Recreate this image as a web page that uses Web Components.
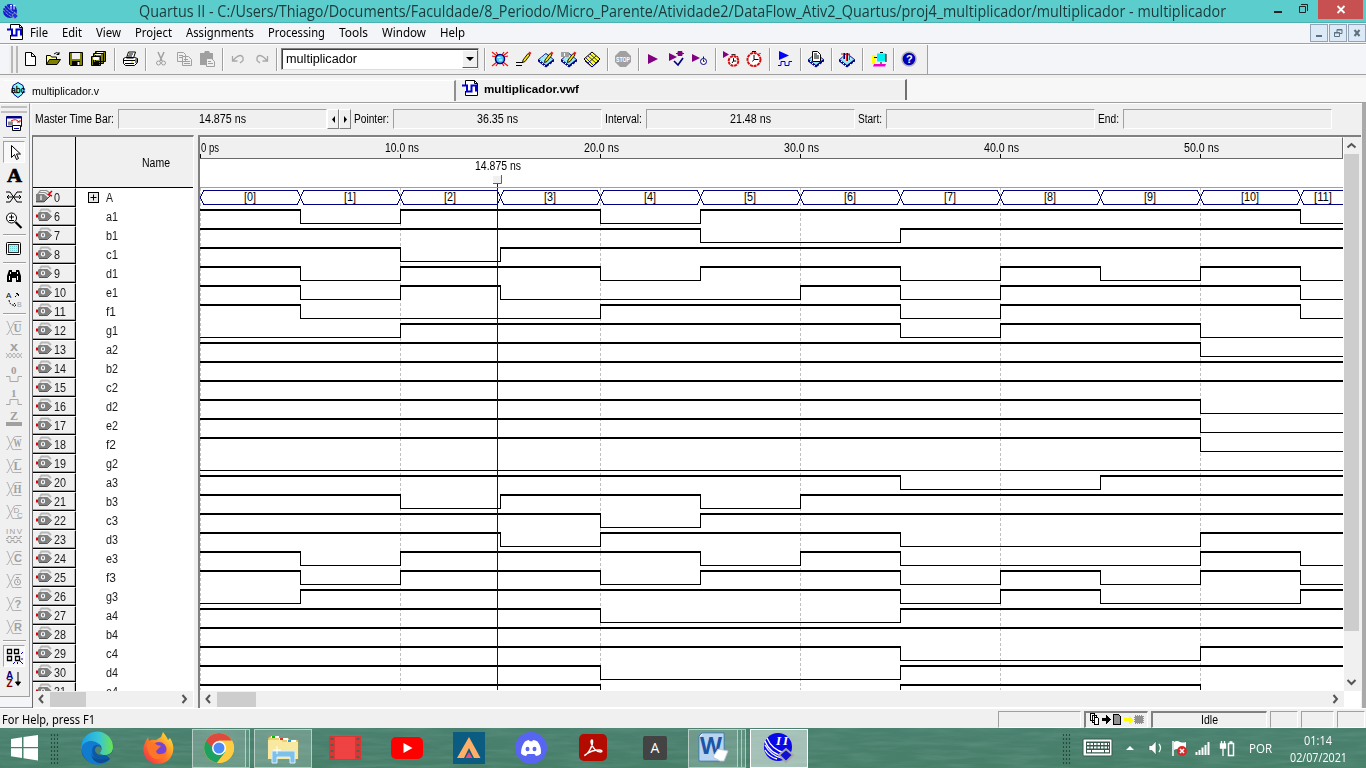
<!DOCTYPE html>
<html lang="en">
<head>
<meta charset="utf-8">
<title>Quartus II</title>
<style>
html,body{margin:0;padding:0;width:1366px;height:768px;overflow:hidden;background:#f0f0f0}
</style>
</head>
<body>
<quartus-window></quartus-window>
<script>
const X = 'style="shape-rendering:crispEdges"';
const T = (x, y, s, t, f = '#a0a0a0', extra = '') => `<text x="${x}" y="${y}" font-size="${s}" fill="${f}" ${extra}>${t}</text>`;
const chip = '<path d="M0 8.500 8 2l8 6.500v2L8 16.500l-8-6z" fill="#000080"/><path d="M1 8.500 8 3l7 5.500-7 5.500z" fill="#8feaf2"/><path d="M3 7.500l5-4M5 9l6-4.500M8 5l4 3" stroke="#fff" stroke-dasharray="1 1"/><path d="M2 11l1-1m1 3 1-1m1 3 1-1m4-1 1 1m2-3 1 1" stroke="#fff"/>';
const pencil = '<path d="M7 9l5-6.500 2 1.500-5 6.500-2.500 1z" fill="#ffe000" stroke="#000" stroke-width=".9"/><path d="M12 2.500l1.500-2 2 1.500-1.500 2z" fill="#e02020"/>';
const watch = (cx, cy, r, c) => `<circle cx="${cx}" cy="${cy}" r="${r}" fill="#fff" stroke="${c}" stroke-width="2" stroke-dasharray="3 .7"/><path d="M${cx} ${cy - r + 2}V${cy}H${cx + r - 2}M${cx} ${cy}l-1.5 2M${cx - 2} ${cy - r - 1.5}h4M${cx + r - 1} ${cy - r}l1 1" stroke="#000" fill="none"/>`;
const bus = '<path d="M.5 1.500h1l5 13h2m7 0h-7M.5 14.500h1l5-9q1-4 3-4h6" fill="none" stroke="#b0b0b0"/>';
const valueIcon = (t, s = 11.5) => bus + T(7.5, 12, s, t, '#a0a0a0', 'font-weight="bold" textLength="8" lengthAdjust="spacingAndGlyphs" style="font-family:Liberation Serif,serif"');

const ICONS = {
  app: '<circle cx="8" cy="8" r="7" fill="#1420c8"/><path d="M2 4q5 7 11 8M1.5 7q5 6 9 7M4 2q4 6 10 8" stroke="#cfe" stroke-width=".9" fill="none" stroke-dasharray="1 .8"/><path d="M8 2.5h2m1.300 0h2M9 2.500v4m3-4v4" stroke="#fff" stroke-width="1"/><path d="M10 12l3-2 3 3-3 3z" fill="#2030e0" stroke="#99a" stroke-width=".7"/>',
  vwf: '<path d="M3.500 5V.5h9l3 3V15.500H3.500V11" fill="#fff" stroke="#000"/><path d="M12.500.5v3h3" fill="none" stroke="#000"/><path d="M0 5.500h5v6h4.500v-6H14v6" fill="none" stroke="#0000d0" stroke-width="2"/>',
  abc: '<path d="M8 .5l5 3 1 5-2 4-4 3-4-3-2-4 1-5z" fill="#8ff" stroke="#000080"/>' + T(1, 11, 9.500, 'abc', '#000', 'stroke="#000" stroke-width=".3" textLength="14" lengthAdjust="spacingAndGlyphs"'),
  new: '<path d="M3.500 1.500h6l4 4v9h-10zM9.500 1.500v4h4" fill="#fff" stroke="#000"/>',
  open: '<path d="M1.500 13.500v-9h4l1 1.500h5v3" fill="#ffff90" stroke="#000"/><path d="M1.500 13.500l3-5h11l-3.500 5z" fill="#808000" stroke="#000"/><path d="M9 3q3-3 5 0m0-2v2.500h-2.500" fill="none" stroke="#000"/>',
  save: '<path d="M1.500 1.500h13v13h-12l-1-1z" fill="#808000" stroke="#000"/><path d="M4 2h8v6H4z" fill="#f0f0f0"/><path d="M4 10h8v4H4z"/><path d="M9.500 11h2v3h-2z" fill="#fff"/>',
  saveall: '<path d="M5.500.5h10v10h-10zM3.500 2.500h10v10h-10zM1.500 5.500h9v9h-9z" fill="#808000" stroke="#000"/><path d="M7 1.500h6M5 3.500h6M3.500 6.500h5v2h-5z" fill="#fff" stroke="#fff"/><path d="M3 11h6v3H3z"/>',
  print: '<path d="M4.500 7l2-6h7l-2 6zM1.500 7.500l2-1h9l3 1v4l-3 3h-9l-2-2z" fill="#fff" stroke="#000"/><path d="M7 3h4M6 5h4M2 9.500h11M3 12.500h9M14 8v4" stroke="#000"/><path d="M9 11h2" stroke="#dd0"/>',
  cut: '<path d="M5 1l4 9M11 1L7 10" stroke="#a0a0a0" stroke-width="1.500"/><circle cx="5.500" cy="12" r="2" fill="none" stroke="#a0a0a0"/><circle cx="10.500" cy="12" r="2" fill="none" stroke="#a0a0a0"/>',
  copy: '<path d="M1.500 1.500h6l2 2v7h-8zM6.500 5.500h6l3 3v6h-9z" fill="#f0f0f0" stroke="#a0a0a0"/><path d="M3 4.500h4M3 6.500h3M8 8.500h4M8 10.500h6M8 12.500h6" stroke="#a0a0a0"/>',
  paste: '<path d="M1 2h4l1-2h4l1 2h3v12H1z" fill="#a0a0a0"/><path d="M7.500 7.500h5l3 3v5h-8z" fill="#f0f0f0" stroke="#a0a0a0"/><path d="M9 10.500h3M9 12.500h5" stroke="#a0a0a0"/>',
  undo: '<path d="M2.500 5v5h5M3 9.500l3-3q5-4 7 0v3l-3 2.500" fill="none" stroke="#a8a8a8" stroke-width="1.300"/>',
  redo: '<path d="M13.500 5v5h-5M13 9.500l-3-3q-5-4-7 0v3l3 2.500" fill="none" stroke="#a8a8a8" stroke-width="1.300"/>',
  pins: '<path d="M0 1l5 4M16 1l-5 4M0 15l5-4M16 15l-5-4M4 1l2 3m6-3-2 3M4 15l2-3m6 3-2-3M0 5l4 1m12-1-4 1" stroke="#f01010" stroke-width="1.200"/><circle cx="8" cy="8" r="4.500" fill="#50c8f0" stroke="#000080" stroke-width="1.500"/><path d="M5.500 6.500h3M7 9h3" stroke="#fff"/>',
  pen: '<path d="M0 11.500h7M0 14.500h6" stroke="#000"/>' + pencil,
  chippen: chip + pencil,
  chipset: chip + '<path d="M0 1h8v5H0z" fill="#a0a0a0"/><path d="M3.500 2v3" stroke="#fff"/>' + pencil,
  chipy: '<path d="M0 8l8-7 8 7-8 8z" fill="#ffff20" stroke="#000"/><path d="M4 5l8 7M12 5l-8 7M6 3l8 7M2 7l7 7" stroke="#000080" stroke-width=".8"/><path d="M1 10l7 6 7-6" stroke="#000080" fill="none"/>',
  stop: '<path d="M5 0h6l5 5v6l-5 5H5l-5-5V5z" fill="#a0a0a0"/>' + T(1, 10.800, 7, 'STOP', '#fff', 'font-weight="bold" textLength="14" lengthAdjust="spacingAndGlyphs"'),
  play: '<path d="M4 3l10 5-10 5z" fill="#800080"/>',
  playcheck: '<path d="M0 2l8 4-8 4z" fill="#800080"/><path d="M5 10l4 4 5-7" fill="none" stroke="#000080" stroke-width="1.700"/><path d="M7 2.500h2m4 0h2M9 .5h4v4H9z" stroke="#800080" fill="#800080"/>',
  playclock: '<path d="M0 3l8 4-8 4z" fill="#800080"/><circle cx="11.500" cy="10.500" r="3" fill="#fff" stroke="#000080"/><path d="M11.500 8.500v2h1M11.500 5.500v2" stroke="#000080" fill="none"/>',
  watch1: '<path d="M0 0l6 3.500L0 7z" fill="#800080"/>' + watch(10.500, 10, 4.800, '#d01010'),
  watch2: watch(8, 8.500, 6.500, '#d01010'),
  sim: '<path d="M2 0l10 4.500L2 9z" fill="#0000ff"/><path d="M1 14.500h3v-4h4v4h4v-4h3" fill="none" stroke="#0000d0"/>',
  report: chip + '<path d="M4.500.5h5l3 3v7h-8z" fill="#fff" stroke="#000"/><path d="M6 3h3M6 5h5M6 7h5" stroke="#000"/>',
  prog: chip + '<path d="M4.500 2v6M7.500 2v8M10.500 3v6M2 3h9" stroke="#e02020" fill="none"/><path d="M5.500 2v6M8.500 2v8" stroke="#000080"/>',
  hw: '<path d="M1 4h3v9H1z" fill="#ffff00"/><path d="M6 2.500h9v8H6z" fill="#00f0f0"/><path d="M3 6.500h3M9 1.500h3M10 11v2M15 3v8" stroke="#000"/><path d="M3 13h12l-1 2.500H2z" fill="#f000d0"/>',
  help: '<circle cx="8" cy="8" r="7" fill="#0000b8" stroke="#b0b0b8" stroke-width="1.500"/>' + T(5, 12, 11, '?', '#fff', 'font-weight="bold"'),
  io: '<path d="M4 3.500l1.500-2H12l3 2.500" fill="none" stroke="#b8b8b8" stroke-width="2"/><path d="M0 6.500h2v3H0z" fill="#e00000"/><path d="M3 4h8.500l4 3.800-4 4.200H3l-1-1V5z" fill="#808080"/><path d="M3 12.500h8.500l4.300-4.500" stroke="#303030" stroke-width=".8" fill="none"/><ellipse cx="7" cy="8" rx="1.600" ry="2" fill="none" stroke="#fff" stroke-width="1.100"/>',
  busio: '<path d="M3 3l1.500-1.500h6l4 3M1.500 5l1.500-1.500h6l4 3" fill="none" stroke="#909090" stroke-width="1.200"/><path d="M16 2l-3.500 3.500L16 7" stroke="#e00000" stroke-width="1.500" fill="none"/><path d="M0 5h8l4 3.500-4 4H0z" fill="#808080"/><path d="M0 12.800h8l6.500-6.300" stroke="#303030" fill="none"/><path d="M5 6.500v4.500" stroke="#fff" stroke-width="1.200"/>',
  insert: '<path d="M.5 1.500h15v10H.5z" fill="#fff" stroke="#000080"/><path d="M1 2.500h14" stroke="#000080" stroke-width="2"/><path d="M2 7.500h5M2 9.500h5" stroke="#888" stroke-width="2"/><path d="M5 6q5-3 8 1m-2 0h3V5" fill="none" stroke="#e00000"/><path d="M6.500 10.500h8v5h-8z" fill="#fff" stroke="#000"/><path d="M8 13.500h5" stroke="#00a"/>',
  arrow: '<path d="M4.500 1.500v12l3-3 2 5 2-1-2-4.500h4z" fill="#fff" stroke="#000"/>',
  text: T(1, 14.500, 18, 'A', '#000', 'font-weight="bold" style="font-family:Liberation Serif,serif" textLength="15" lengthAdjust="spacingAndGlyphs" stroke="#000" stroke-width=".6"'),
  stretch: '<path d="M0 3h4l7 10h5M0 13h4l7-10h5M1 8h14M3 6L1 8l2 2M13 6l2 2-2 2" fill="none" stroke="#000"/>',
  zoom: '<circle cx="5.500" cy="6" r="5" fill="#fff" stroke="#000"/><path d="M9.500 10l6 6" stroke="#000" stroke-width="2.200"/><path d="M3 5h5M5.500 2.500v5M3 8.500h5" stroke="#000"/>',
  full: '<rect x=".5" y="2.500" width="14" height="12" rx="1" fill="#fff" stroke="#000"/><rect x="2.500" y="4.500" width="10" height="8" fill="#b8f0f0" stroke="#303030"/><path d="M4 6.500h8M4 8.500h8M4 10.500h8" stroke="#70d0d8" stroke-dasharray="1 1"/>',
  find: '<path d="M3 2h3v2h4V2h3l2 6v6h-5v-4H6v4H1V8z" fill="#000"/><path d="M3.500 8v4M11.500 8v4M4.500 4v2M11.500 4v2" stroke="#fff"/>',
  replace: T(0, 6, 8, 'A', '#000') + T(11, 15, 7, 'B', '#a0a0a0') + '<path d="M3 8q1 6 6 5M9 5l3-3M8 11l2 2-2 2M10 1.500h2.500V4" stroke="#000" fill="none" stroke-dasharray="2 1"/>',
  u: valueIcon('U'),
  x: T(4, 8, 13, 'x', '#a0a0a0', 'font-weight="bold" textLength="8" lengthAdjust="spacingAndGlyphs"') + '<path d="M0 15l4-5 4 5 4-5 4 5M0 10l4 5 4-5 4 5 4-5" fill="none" stroke="#b0b0b0"/>',
  zero: T(5, 8, 11, '0', '#a0a0a0', 'font-weight="bold" style="font-family:Liberation Serif,serif"') + '<path d="M0 10.500h4v5h8v-5h4" fill="none" stroke="#a8a8a8"/>',
  one: T(5, 8, 11, '1', '#a0a0a0', 'font-weight="bold" style="font-family:Liberation Serif,serif"') + '<path d="M0 15.500h4v-5h8v5h4" fill="none" stroke="#a8a8a8"/>',
  z: T(4, 8.500, 12, 'Z', '#a0a0a0', 'font-weight="bold" style="font-family:Liberation Serif,serif"') + '<path d="M0 11h16v4H0z" fill="#a0a0a0"/>',
  w: valueIcon('W'), l: valueIcon('L'), h: valueIcon('H'),
  dc: bus + T(7.500, 9, 8, 'D') + T(11, 14, 8, 'C'),
  inv: T(0, 7, 8, 'INV', '#a0a0a0', 'textLength="16"') + '<path d="M0 11.500h2v-2h3v2h3v-2h3v2h3v-2h2M0 13.500h2v2h3v-2h3v2h3v-2h3v2h2" fill="none" stroke="#a8a8a8"/>',
  c: bus + T(8, 12, 11, 'C', '#a0a0a0', 'font-weight="bold"'),
  clk: bus + '<circle cx="11.500" cy="9" r="3" fill="none" stroke="#a0a0a0"/><path d="M11.500 7.500v2h1M10 4.500h3" stroke="#a0a0a0" fill="none"/>',
  q: bus + T(8.500, 12, 11, '?', '#a0a0a0', 'font-weight="bold"'),
  r: bus + T(8, 12, 11, 'R', '#a0a0a0', 'font-weight="bold"'),
  snap: '<path d="M.5 1.500h4v4h-4zM7.500 1.500h4v4h-4zM.5 8.500h4v4h-4zM8.500 8.500h4v4h-4z" fill="#fff" stroke="#000" stroke-width="1.300"/><path d="M14 6l2-2M14 11h2M13 13l3 3M10.500 14v2M8 14l-2 2" stroke="#00c"/>',
  sort: T(0, 7.500, 10, 'A', '#000080', 'font-weight="bold"') + T(0.500, 16, 10, 'Z', '#800000', 'font-weight="bold"') + '<path d="M12 1v13M9.500 11l2.500 3.500 2.500-3.500z" stroke="#000" fill="#000"/>',
  flow: '<g ' + X + '><path d="M1.500.5h4v7h-4zM3.500 2.500h4v7h-4z" fill="#fff" stroke="#000"/><path d="M5.500 4.500h3l1 1v6h-4z" fill="#fff" stroke="#000"/><path d="M13 5h4V2l5 5-5 4V8h-4z"/><path d="M24.500 1.500h5l2 2v8h-7z" fill="#909090" stroke="#000"/><path d="M35 5h5V2l4 5-4 4V8h-5z" fill="#ff0"/></g><path d="M46 3h8v7h-8z" fill="#909090" stroke="#909090" stroke-width="2" stroke-dasharray="1 1"/>'
};

const BIG = {
  win: '<path d="M0 5l11-1.700V13H0zM12.500 3L27 1v12H12.500zM0 14.200h11V24L0 22.300zM12.500 14.200H27V26.500l-14.500-2.200z" fill="#fff"/>',
  edge: '<defs><linearGradient id="e1" x1="0" x2="1"><stop offset="0" stop-color="#1b9de2"/><stop offset=".55" stop-color="#38c4d8"/><stop offset="1" stop-color="#6be34c"/></linearGradient></defs><circle cx="16" cy="16" r="16" fill="#0c59a4"/><path d="M0 16A16 16 0 0 1 32 15c0 6-4 8-8 8-5 0-6-2-4-4 2-4-1-8-6-8C6 11 1 16 1 21z" fill="url(#e1)"/><path d="M1 14C6 6 17 9 19 14c-7-4-10 5-6 11 4 6 12 5 17 1C24 35 10 35 4 26 1 22 0 18 1 14z" fill="#117bd0"/><path d="M11 17c-3 7 4 14 17 9l2 0c-6 7-16 7-19-1-1-3-1-5 0-8z" fill="#0e4d94"/><path d="M16 14.500c3-1 5 2 4 4-2 3-1 4 2 4.500-4 1-8-2-8-5 0-2 1-3 2-3.500z" fill="#4e8371"/><path d="M24 23q5 1 8-4l1 5-4 4q0-3-5-5z" fill="#4a806e"/>',
  firefox: '<defs><linearGradient id="f1" x1="1" y1="0" x2="0" y2="1"><stop offset="0" stop-color="#fff14a"/><stop offset=".45" stop-color="#ff8a20"/><stop offset="1" stop-color="#f0254f"/></linearGradient></defs><path d="M20 0c2 3 4 5 5 8l2-2c3 5 4 9 3 14-2 8-8 12-15 12S1 27 .5 19C0 13 3 9 5 5l1 4c3-2 5-1 7-1l5-3z" fill="url(#f1)"/><circle cx="16" cy="17.500" r="7.500" fill="#7545d8"/><path d="M4 12c4-3 8-1 10 1l4 1-4 4c-2 1 0 5 4 4 4 0 6-3 5-6 3 8-4 12-10 11-6-1-9-8-9-15z" fill="#ff7528"/>',
  chrome: '<circle cx="16" cy="16" r="15" fill="#ffcd42"/><path d="M16 16L3 8.500a15 15 0 0 0 11 22.300L22.500 20z" fill="#1da160"/><path d="M16 8.500h13a15 15 0 0 1-15 22.300L22.500 20z" fill="#ffcd42"/><path d="M16 9L3 8.500l3 6 5 7 5-5z" fill="#1da160"/><path d="M3 8.500A15 15 0 0 1 29 8.500H16l-6 5-1 2z" fill="#dd4b3e"/><circle cx="16" cy="16" r="7" fill="#fff"/><circle cx="16" cy="16" r="5.500" fill="#4c8bf5"/>',
  explorer: '<path d="M1 6l3-2h6l2 2h9l2 2h8v19H1z" fill="#e9cf70" stroke="#b99a3a" stroke-width=".6"/><path d="M4 5h8M12 7h9M20 9h9" stroke="#fff" stroke-width="2"/><path d="M5 5h3" stroke="#0b0" stroke-width="2"/><path d="M13 7h3" stroke="#d33" stroke-width="2"/><path d="M21 9h3" stroke="#29d" stroke-width="2"/><path d="M1 8h13l2 2h15v17H1z" fill="#f8e8a0"/><path d="M5 31V19h23v12h-5v-6H10v6z" fill="#7dc0e8" stroke="#d8f0ff"/><path d="M10 14v8M6 18h8" stroke="#fff"/>',
  film: '<path d="M0 4h32v24H0z" fill="#d93636"/><path d="M6 5h20v22H6z" fill="#ef4242"/><path d="M3 6v21M29 6v21" stroke="#4a6250" stroke-width="2.500" stroke-dasharray="2 4"/>',
  youtube: '<rect y="5" width="32" height="22" rx="5" fill="#f00"/><path d="M12.500 11l9 5-9 5z" fill="#fff"/>',
  tile: '<path d="M0 0h32v32H0z" fill="#0b5c80"/><path d="M16 5L27.500 26h-6.500L16 16l-5 10H4z" fill="#ffb066"/><path d="M16 20l3.500 6h-7z" fill="#f04a80"/>',
  discord: '<circle cx="16" cy="16" r="16" fill="#5865f2"/><path d="M10 9.500q2-1.500 4-1.500l.7 1.300h2.600L18 8q2.500 0 4.500 1.500 4 5 3.500 12-2 2-5 2.500l-1.500-2h-7L11 24q-3-.5-5-2.500 0-7 4-12z" fill="#fff"/><ellipse cx="12.500" cy="17" rx="2" ry="2.300" fill="#5865f2"/><ellipse cx="19.500" cy="17" rx="2" ry="2.300" fill="#5865f2"/>',
  adobe: '<rect x="2" y="2" width="28" height="27" rx="5" fill="#b30b00"/><path d="M8 23c3-1 8-9 7.500-14 0-2-2.500-1-1 3 1.500 4 5 8 9 8 2 0 2-2-1-2-4 0-9 1-13 4-1.500 1-2 2-1.500 1z" fill="none" stroke="#fff" stroke-width="1.500"/>',
  dark: '<rect x="4" y="4" width="24" height="24" rx="2" fill="#434343"/>' + T(11.500, 21, 14, 'A', '#fff'),
  word: '<path d="M2 4l3-3h22v28H2z" fill="#e6f0fa" stroke="#3a78b8"/><path d="M3 5l3-3h20v26H3z" fill="#b9d4ee"/>' + T(3, 22, 23, 'W', '#1b55a8', 'font-weight="bold" textLength="22" lengthAdjust="spacingAndGlyphs"') + '<path d="M16 25l5-8 10 2-4 10h-4z" fill="#fff" stroke="#bcd"/>',
  quartus: '<circle cx="15" cy="15" r="14" fill="#0808e8"/><path d="M2 9q5 13 19 15M2 13q6 11 17 13M4 6q5 12 18 15M2 18q4 7 12 9" fill="none" stroke="#fff" stroke-width="1.300"/>' + T(13, 13, 13, 'II', '#fff', 'font-weight="bold" font-style="italic" style="font-family:Liberation Serif,serif" textLength="12"') + '<path d="M16 23l7-6 7 6-7 7z" fill="#1010d0" stroke="#a8a8a8" stroke-width="2"/>',
  keyboard: '<rect x="1" y="7" width="29" height="17" rx="1" fill="#fff" stroke="#35594d"/><path d="M4 9.500h24v12H4z" fill="#35594d"/><path d="M5 12h22M5 15.500h22" stroke="#fff" stroke-width="2.200" stroke-dasharray="2.500 1"/><path d="M5 19.200h4m1 0h12m1 0h4" stroke="#fff" stroke-width="2.200"/>',
  up: '<path d="M12 18l4-4 4 4z" fill="#fff"/>',
  speaker: '<path d="M10 13.500h3l4-4.500v14l-4-4.500h-3z" fill="#fff" stroke="#35594d" stroke-width=".6"/><path d="M20 12q3 4 0 8" stroke="#dfe" fill="none" stroke-width="1.300"/>',
  flag: '<path d="M9 9v15" stroke="#fff" stroke-width="1.500"/><path d="M10 10q3-2 6 0 3 1 6 0v8q-3 2-6 0-3-2-6 0z" fill="#fff"/><circle cx="18" cy="19" r="5" fill="#d82a2a"/><path d="M16 17l4 4m0-4l-4 4" stroke="#fff" stroke-width="1.500"/>',
  signal: '<path d="M9.500 20v3M12.500 18v5M15.500 15.500V23M18.500 13v10M21.500 10v13" stroke="#fff" stroke-width="2"/>',
  battery: '<path d="M17.500 11.500h5v12h-5zM18.500 10h3" fill="none" stroke="#fff" stroke-width="1.500"/><path d="M9.500 12h5v4h-5zM10.500 9v3M13.500 9v3M12 16v8" stroke="#fff" stroke-width="1.300" fill="#fff"/>'
};

function define(name, css, html, after) {
  customElements.define(name, class extends HTMLElement {
    connectedCallback() {
      if (this.shadowRoot) return;
      const root = this.attachShadow({ mode: 'open' });
      root.innerHTML = `<style>*{box-sizing:border-box}${css}</style>` + (typeof html === 'function' ? html(this) : html);
      if (after) after(this, root);
    }
  });
}

/* Text squeezed horizontally to an exact width */
define('fit-text', ':host{display:block;white-space:nowrap;overflow:visible;flex:none}span{display:inline-block;transform-origin:0 50%}',
  '<span><slot></slot></span>', (el, root) => {
    const w = +el.getAttribute('w'), s = root.querySelector('span');
    el.style.width = w + 'px';
    const n = s.getBoundingClientRect().width;
    if (n) s.style.transform = `scaleX(${w / n})`;
  });

define('q-icon', ':host{display:block;flex:none;width:16px;height:16px}svg{display:block;width:100%;height:100%;overflow:visible;font-family:"Liberation Sans",sans-serif}',
  el => { const n = el.getAttribute('name'); return `<svg viewBox="0 0 ${n === 'flow' ? '56 14' : '16 16'}">${ICONS[n]}</svg>`; });
define('big-icon', ':host{display:block;flex:none;width:32px;height:32px}svg{display:block;width:100%;height:100%;overflow:visible;font-family:"Open Sans",sans-serif}',
  el => `<svg viewBox="0 0 32 32">${BIG[el.getAttribute('name')]}</svg>`);

define('title-bar', ':host{display:flex;height:23px;background:#5bcdcc;border-bottom:1px solid #4bb2b1;font:16px/23px "Open Sans",sans-serif;color:#1d3a3a}q-icon{margin:3px 0 0 2px}fit-text{margin-left:121px}.b{display:flex;margin-left:auto}.b svg{display:block}.x{width:45px;height:19px;background:#c75050;margin-right:3px}',
  `<q-icon name="app"></q-icon><fit-text w="1087">Quartus II - C:/Users/Thiago/Documents/Faculdade/8_Periodo/Micro_Parente/Atividade2/DataFlow_Ativ2_Quartus/proj4_multiplicador/multiplicador - multiplicador</fit-text>
  <div class="b"><svg width="52" height="19"><path d="M8 12h8" stroke="#222" stroke-width="2"/><path d="M33.500 6.500h6v6h-6zM35 4.500h6.500V11" fill="none" stroke="#222"/></svg><svg class="x" width="45" height="19"><path d="M19.500 6l7 7m0-7l-7 7" stroke="#fff" stroke-width="1.800"/></svg></div>`);

const MENU = [['File', 30, 18], ['Edit', 62, 20], ['View', 96, 25], ['Project', 135, 37], ['Assignments', 186, 68], ['Processing', 268, 57], ['Tools', 339, 29], ['Window', 382, 44], ['Help', 440, 25]];
define('menu-bar', ':host{display:flex;height:21px;background:#f4f5f8;border-bottom:1px solid #a0a0a0;font:12px/20px "Noto Sans",sans-serif;color:#000}q-icon{margin:1px 0 0 7px}.b{margin-left:auto;display:flex;gap:1px;padding-top:1px}.b svg{background:#dce9f7;border:1px solid #93a3b5;display:block}',
  () => { let p = 23; return '<q-icon name="vwf"></q-icon>' + MENU.map(([t, x, w]) => { const m = x - p; p = x + w; return `<fit-text w="${w}" style="margin-left:${m}px">${t}</fit-text>`; }).join('') +
    `<div class="b"><svg width="18" height="18"><path d="M5 11h6" stroke="#61707f" stroke-width="2"/></svg><svg width="18" height="18"><path d="M4.500 7.500h5v4h-5zM7 7V4.500h5v4h-2M4 8h6M7 5h5" fill="none" stroke="#61707f"/></svg><svg width="18" height="18"><path d="M5.500 5l5 6m0-6l-5 6" stroke="#61707f" stroke-width="2"/></svg></div>`; });

const TOOLS = [['new', 30], ['open', 53], ['save', 76], ['saveall', 98], ['|', 115], ['print', 130], ['|', 146], ['cut', 161], ['copy', 184], ['paste', 207], ['|', 223], ['undo', 238], ['redo', 262], ['|', 277], ['combo', 380], ['|', 485], ['pins', 500], ['pen', 524], ['chippen', 546], ['chipset', 569], ['chipy', 592], ['|', 608], ['stop', 623], ['|', 639], ['play', 652], ['playcheck', 677], ['playclock', 700], ['|', 716], ['watch1', 731], ['watch2', 754], ['|', 770], ['sim', 785], ['|', 801], ['report', 816], ['|', 832], ['prog', 847], ['|', 863], ['hw', 879], ['|', 894], ['help', 909]];
define('tool-bar', ':host{display:flex;height:31px;border-top:1px solid #fff;border-bottom:1px solid #a0a0a0;background:#f4f5f8}.lead{width:9px;background:#f4f5f8}.main{display:flex;align-items:center;width:919px;background:#f0f0f0;border-right:1px solid #a0a0a0;padding-bottom:1px}.grip{width:7px;height:27px;border-left:2px solid #b8b8b8;border-right:2px solid #b8b8b8;margin-left:2px;flex:none}.sep{width:2px;height:23px;border-left:1px solid #a0a0a0;border-right:1px solid #fff;flex:none}.combo{width:198px;height:22px;border:1px solid #808080;border-right-color:#ddd;border-bottom-color:#ddd;background:#fff;box-shadow:inset 1px 1px #404040;flex:none;display:flex;justify-content:space-between;font:12px/21px "Liberation Sans",sans-serif}.combo fit-text{margin-left:4px}.dd{width:16px;background:#f0f0f0;border:1px solid #fff;border-right-color:#606060;border-bottom-color:#606060;margin:1px 0;display:flex;align-items:center;justify-content:center}.dd i{border:4px solid transparent;border-top:4px solid #000;border-bottom:0}',
  () => { let p = 18; return '<div class="lead"></div><div class="main"><div class="grip"></div>' + TOOLS.map(([n, c]) => { const w = n === '|' ? 2 : n === 'combo' ? 198 : 16, x = c - w / 2, m = x - p; p = x + w; const s = `style="margin-left:${m}px"`; return n === '|' ? `<div class="sep" ${s}></div>` : n === 'combo' ? `<div class="combo" ${s}><fit-text w="71">multiplicador</fit-text><div class="dd"><i></i></div></div>` : `<q-icon name="${n}" ${s}></q-icon>`; }).join('') + '</div>'; });

define('doc-tabs', ':host{display:flex;height:28px;background:#f7f7f7;border-top:3px solid #f0f0f0;border-bottom:1px solid #a0a0a0;padding:1px 0 0 4px;font:11px/23px "Liberation Sans",sans-serif}div{display:flex;height:21px}.a{width:452px;border-right:2px solid #909090;border-top:1px solid #fff;margin-top:1px}.b{width:451px;background:#f0f0f0;border-right:2px solid #707070;border-top:1px solid #fff;font-weight:bold}q-icon{margin-top:1px}',
  '<div class="a"><q-icon name="abc" style="margin-left:6px"></q-icon><fit-text w="67" style="margin-left:6px;line-height:21px">multiplicador.v</fit-text></div><div class="b"><q-icon name="vwf" style="margin:0 0 0 6px"></q-icon><fit-text w="95" style="margin-left:6px;line-height:19px">multiplicador.vwf</fit-text></div>');

define('time-bar', ':host{display:flex;height:31px;border-top:1px solid #fff;padding:5px 0 0 5px;font:12px/21px "Liberation Sans",sans-serif;color:#000}.f{width:209px;height:20px;border:1px solid #fff;border-top-color:#a0a0a0;border-left-color:#a0a0a0;display:flex;justify-content:center;flex:none;margin-left:4px;line-height:19px}.l{margin-left:3px}.n{width:12px;height:20px;border:1px solid #fff;border-right:1px solid #808080;border-bottom:1px solid #808080;display:flex;align-items:center;justify-content:center}.n svg{width:5px;height:7px}',
  '<fit-text w="79">Master Time Bar:</fit-text><div class="f"><fit-text w="47">14.875 ns</fit-text></div><div class="n"><svg><path d="M4 0v7L1 3.500z"/></svg></div><div class="n"><svg><path d="M1 0v7l3-3.500z"/></svg></div><fit-text class="l" w="35">Pointer:</fit-text><div class="f"><fit-text w="41">36.35 ns</fit-text></div><fit-text class="l" w="37">Interval:</fit-text><div class="f"><fit-text w="41">21.48 ns</fit-text></div><fit-text class="l" w="24">Start:</fit-text><div class="f"></div><fit-text class="l" w="21">End:</fit-text><div class="f"></div>');

const SIDE = [['insert', 123], ['|', 138], ['arrow', 152, 1], ['text', 175], ['stretch', 197], ['zoom', 220], ['|', 235], ['full', 248], ['|', 263], ['find', 276], ['replace', 300], ['|', 314], ['u', 328], ['x', 351], ['zero', 374], ['one', 397], ['z', 419], ['w', 443], ['l', 466], ['h', 489], ['dc', 512], ['inv', 535], ['c', 558], ['clk', 581], ['q', 604], ['r', 627], ['|', 641], ['snap', 656, 1], ['sort', 679]];
define('side-tools', ':host{display:block;width:32px;height:605px;background:#f4f5f8;flex:none;border-bottom:1px solid #a0a0a0}.p{width:30px;height:594px;background:#f0f0f0;border-right:1px solid #a0a0a0;border-bottom:1px solid #a0a0a0;border-top:1px solid #fff;display:flex;flex-direction:column}.g{height:7px;margin:2px 2px 0 1px;border-top:2px solid #c0c0c0;border-bottom:2px solid #c0c0c0;flex:none}.s{height:2px;margin-left:3px;width:23px;border-top:1px solid #a0a0a0;border-bottom:1px solid #fff;flex:none}.k{height:22px;width:22px;margin-left:3px;padding:3px;border:1px solid #fff;border-top-color:#a0a0a0;border-left-color:#a0a0a0;background:#f8f8f8;flex:none}.k q-icon{margin:-1px 0 0 0}.i{margin-left:6px}',
  () => { let p = 113; return '<div class="p"><div class="g"></div>' + SIDE.map(([n, c, k]) => { const h = n === '|' ? 2 : k ? 22 : 16, y = c - h / 2, m = y - p; p = y + h; const s = `style="margin-top:${m}px"`; return n === '|' ? `<div class="s" ${s}></div>` : k ? `<div class="k" ${s}><q-icon name="${n}"></q-icon></div>` : `<q-icon class="i" name="${n}" ${s}></q-icon>`; }).join('') + '</div>'; });

/* index, name, low intervals in 5 ns steps */
const E = 12;
const SIG = [[6, 'a1', [1, 2], [4, 5], [11, E]], [7, 'b1', [5, 7]], [8, 'c1', [2, 3]], [9, 'd1', [1, 2], [4, 5], [7, 8], [9, 10], [11, E]], [10, 'e1', [1, 2], [3, 6], [7, 8], [11, E]], [11, 'f1', [1, 4], [7, 8], [11, E]], [12, 'g1', [0, 2], [7, 8], [10, E]], [13, 'a2', [10, E]], [14, 'b2'], [15, 'c2'], [16, 'd2', [10, E]], [17, 'e2', [10, E]], [18, 'f2', [10, E]], [19, 'g2', [0, E]], [20, 'a3', [7, 9]], [21, 'b3', [2, 3], [5, 6]], [22, 'c3', [4, 5]], [23, 'd3', [3, 4], [7, 10]], [24, 'e3', [1, 2], [5, 6], [7, 10], [11, E]], [25, 'f3', [1, 2], [4, 5], [7, 8], [9, 10], [11, E]], [26, 'g3', [0, 1], [7, 8], [9, 11]], [27, 'a4', [4, 7]], [28, 'b4'], [29, 'c4', [7, 10]], [30, 'd4', [4, 7]], [31, 'e4', [4, 7], [10, E]]];

define('h-scroll', ':host{display:flex;align-items:center;height:16px;background:#f0f0f0}i{display:block;height:15px;background:#cdcdcd}svg{flex:none;display:block}',
  el => `<svg width="17" height="16"><path d="M10 4L6.500 8l3.500 4" fill="none" stroke="#555" stroke-width="2"/></svg><i style="width:${el.getAttribute('thumb')}px"></i><svg width="17" height="16" style="margin-left:auto"><path d="M6.500 4L10 8l-3.500 4" fill="none" stroke="#555" stroke-width="2"/></svg>`);

define('signal-list', ':host{display:block;width:162px;height:573px;flex:none;border-left:1px solid #696969;border-top:2px solid #808080;border-right:1px solid #fff;background:#fff;font:12px/18px "Liberation Sans",sans-serif;color:#1a1a1a}.h{display:flex;height:51px;background:#f0f0f0;border-bottom:1px solid #000}.h .c{width:43px;border-right:1px solid #000;flex:none}.h fit-text{margin:17px 0 0 66px;color:#000}.rows{height:503px;overflow:hidden}.r{display:flex;height:19px}.i{width:43px;height:19px;background:#f0f0f0;border-top:1px solid #fff;border-right:1px solid #000;border-bottom:1px solid #000;box-shadow:inset 0 -1px #a0a0a0,inset -1px 0 #c0c0c0;display:flex;padding-left:3px;line-height:18px;flex:none}.i q-icon{margin-top:0}.i fit-text{margin-left:2px}.n{margin:1px 0 0 30px}.plus{width:11px;height:11px;border:1px solid #000;background:#e8e8e8;margin:4px 0 0 12px;flex:none}.plus svg{display:block}h-scroll{margin-top:0}',
  () => `<div class="h"><div class="c"></div><fit-text w="28">Name</fit-text></div><div class="rows"><div class="r"><div class="i"><q-icon name="busio"></q-icon><fit-text w="6">0</fit-text></div><div class="plus"><svg width="9" height="9"><path d="M4.500 1.500v6M1.500 4.500h6" stroke="#000"/></svg></div><fit-text w="7" style="margin:1px 0 0 7px">A</fit-text></div>` + SIG.map(([i, n]) => `<div class="r"><div class="i"><q-icon name="io"></q-icon><fit-text w="${i > 9 ? 12 : 6}">${i}</fit-text></div><fit-text class="n" w="${n[0] === 'f' ? 10 : 12}">${n}</fit-text></div>`).join('') + '</div><h-scroll thumb="36"></h-scroll>');

const ruler = [['0 ps', 1, 18], ['10.0 ns', 185, 34], ['20.0 ns', 384, 35], ['30.0 ns', 584, 35], ['40.0 ns', 784, 35], ['50.0 ns', 984, 35]];
function waves() {
  const W = 1143; let s = '';
  for (let x = 0.5; x < W; x += 200) s += `<path d="M${x} 0V503" stroke="#c0c0c0" stroke-dasharray="3 2"/>`;
  for (let k = 0; k < E; k++) {
    const a = k * 100, b = a + 100;
    s += `<path d="M${a + .5} 9.500L${a + 3.500} 2.500H${b - 2.500}L${b + .5} 9.500L${b - 2.500} 16.500H${a + 3.500}Z" fill="none" stroke="#000080"/>`;
    const n = `[${k}]`, w = k > 9 ? 18 : 12;
    s += `<text x="${k === 11 ? 1123 : a + 50}" y="13" text-anchor="middle" textLength="${w}" lengthAdjust="spacingAndGlyphs">${n}</text>`;
  }
  SIG.forEach(([, , ...lows], r) => {
    const hi = 22 + r * 19, lo = hi + 13.500; let x = 0;
    const H = (a, b) => { if (b > a) s += `<path d="M${a * 100} ${hi}H${Math.min(b * 100 + 1, W)}" stroke="#000" stroke-width="2"/>`; };
    for (const [a, b] of lows) {
      H(x, a);
      s += `<path d="M${a * 100} ${lo}H${Math.min(b * 100, W)}" stroke="#000"/>`;
      if (a > 0) s += `<path d="M${a * 100 + .5} ${hi - 1}V${lo + .5}" stroke="#000"/>`;
      if (b < E) s += `<path d="M${b * 100 + .5} ${hi - 1}V${lo}" stroke="#000"/>`;
      x = b;
    }
    H(x, E);
  });
  return s + '<path d="M297.500 0V503" stroke="#0000c0"/>';
}
define('wave-view', ':host{display:flex;flex-direction:column;width:1163px;height:573px;flex:none;border-left:2px solid #808080;border-top:2px solid #808080;background:#fff;font:12px/20px "Liberation Sans",sans-serif}.top{display:flex;height:554px;flex:none}.m{width:1144px}.ruler{height:22px;display:flex;background:#f0f0f0;border-bottom:1px solid #696969;border-right:1px solid #696969;border-top:1px solid #fff;width:1143px;position:relative}.ruler svg{position:absolute;left:0;bottom:0}.cur{height:29px;border-bottom:1px solid #a0a0a0;width:1143px;display:flex;flex-direction:column;line-height:14px}.cur fit-text{margin:0 0 0 275px}.cur svg{display:block;margin:1px 0 0 293px}.w{display:block;width:1143px;height:502px;shape-rendering:crispEdges;font:12px "Liberation Sans",sans-serif}.v{width:17px;background:#f0f0f0;display:flex;flex-direction:column}.v i{height:477px;width:15px;background:#cdcdcd}.v svg{display:block}',
  () => { let p = 0; return `<div class="top"><div class="m"><div class="ruler">${ruler.map(([t, x, w]) => { const m = x - p; p = x + w; return `<fit-text w="${w}" style="margin-left:${m}px">${t}</fit-text>`; }).join('')}<svg width="1142" height="5"><path d="M.5 1v4m200-4v4m200-4v4m200-4v4m200-4v4m200-4v4" stroke="#000"/></svg></div><div class="cur"><fit-text w="46">14.875 ns</fit-text><svg width="10" height="13"><path d="M0 2h8v7H0z" fill="#f0f0f0"/><path d="M0 9.500h8.500V1" fill="none" stroke="#606060"/><path d="M4.500 10v3" stroke="#0000c0"/></svg></div><svg class="w">${waves()}</svg></div><div class="v"><svg width="15" height="17"><path d="M3.500 10.500L7.500 7l4 3.500" fill="none" stroke="#555" stroke-width="2"/></svg><i></i><svg width="15" height="17" style="margin-top:43px"><path d="M3.500 6L7.500 10l4-4" fill="none" stroke="#555" stroke-width="2"/></svg></div></div><h-scroll thumb="39" style="width:1144px"></h-scroll>`; });

define('status-bar', ':host{display:flex;height:20px;background:#f0f0f0;border-top:1px solid #fff;font:12px/21px "Noto Sans",sans-serif;align-items:flex-start;padding-left:2px}.c{height:17px;margin-top:2px;border:1px solid #fff;border-top-color:#a0a0a0;border-left-color:#a0a0a0;display:flex;justify-content:center;flex:none;margin-left:3px}.d{border-top:2px solid #808080;border-left:2px solid #808080}q-icon{width:56px;height:14px}',
  '<fit-text w="93">For Help, press F1</fit-text><div class="c" style="width:83px;margin-left:903px"></div><div class="c d" style="width:64px"><q-icon name="flow"></q-icon></div><div class="c d" style="width:116px;font:12px/15px Liberation Sans,sans-serif"><fit-text w="17">Idle</fit-text></div><div class="c" style="width:28px"></div><div class="c" style="width:33px"></div><div class="c" style="width:28px"></div>');

const TASK = [['edge', 97], ['firefox', 159], ['chrome', 219, 192, 54], ['explorer', 283, 254, 58], ['film', 345], ['youtube', 407], ['tile', 469], ['discord', 531], ['adobe', 593], ['dark', 655], ['word', 713, 688, 50], ['quartus', 779, 750, 58]];
define('task-bar', ':host{display:grid;height:40px;overflow:hidden;background:linear-gradient(#4a806f,#477f69);color:#fff;font:12px/17px "Open Sans",sans-serif}.bg,.bar{grid-area:1/1}.bg{width:1366px;height:40px;display:block}.bar{display:flex;height:40px;padding-left:11px;z-index:1}.start{margin:4px 0 0 0}.dots{width:9px;height:31px;margin:5px 0 0 7px;background:radial-gradient(#1d3b31cc .7px,transparent 1.100px) 0 0/3px 4px;flex:none}big-icon{margin-top:4px}.box{height:39px;margin-top:1px;background:#ffffff33;border:1px solid #ffffff80;display:flex;justify-content:center;flex:none}.box big-icon{margin-top:2px}.box.on{background:#ffffff80;border-color:#fff}.st{width:4px;height:39px;margin-top:1px;border:1px solid #ffffff80;border-left:0;background:#ffffff20}.clk{margin-left:17px;padding-top:4px;width:58px;display:flex;flex-direction:column;align-items:center}.tray big-icon{flex:none}',
  () => { let p = 59;
    const apps = TASK.map(([n, c, bx, bw]) => { const w = bw || 32, x = bx || c - 16, m = x - p; p = x + w; let h = bw ? `<div class="box ${n === 'quartus' ? 'on' : ''}" style="width:${bw}px;margin-left:${m}px"><big-icon name="${n}"></big-icon></div>` : `<big-icon name="${n}" style="margin-left:${m}px"></big-icon>`; const k = n === 'chrome' ? 1 : n === 'word' ? 2 : 0; for (let i = 0; i < k; i++) { h += '<div class="st"></div>'; p += 4; } return h; }).join('');
    p = 1071;
    const tray = [['keyboard', 1098], ['up', 1130], ['speaker', 1155], ['flag', 1180], ['signal', 1203], ['battery', 1227]].map(([n, c]) => { const x = c - 16, m = x - p; p = x + 32; return `<big-icon name="${n}" style="margin-left:${m}px"></big-icon>`; }).join('');
    return `<svg class="bg"><filter id="t" x="0" y="0" width="100%" height="100%"><feTurbulence type="fractalNoise" baseFrequency=".025 .22" numOctaves="4" seed="5"/><feColorMatrix values="0 0 0 0 .1  0 0 0 0 .27  0 0 0 0 .2  1.600 0 0 0 -.6"/></filter><rect width="1366" height="40" filter="url(#t)"/></svg><div class="bar"><big-icon class="start" name="win" style="margin-top:6px"></big-icon><div class="dots"></div>${apps}<div class="dots" style="margin-left:254px"></div>${tray}<fit-text w="23" style="margin:12px 0 0 6px">POR</fit-text><div class="clk"><fit-text w="28">01:14</fit-text><fit-text w="57">02/07/2021</fit-text></div></div>`; });

define('quartus-window', ':host{display:flex;flex-direction:column;width:1366px;height:768px;background:#f0f0f0}.body{display:flex;height:605px;flex:none}.main{display:flex;flex-direction:column;width:1330px}title-bar,menu-bar,tool-bar,doc-tabs,status-bar,task-bar{flex:none}time-bar{margin-left:-2px}.panes{display:flex;gap:2px;height:573px;margin-top:1px}.panes wave-view{margin-left:2px}.edge{width:4px;background:#a9a9a9;height:605px;flex:none}',
  '<title-bar></title-bar><menu-bar></menu-bar><tool-bar></tool-bar><doc-tabs></doc-tabs><div class="body"><side-tools></side-tools><div class="main"><time-bar></time-bar><div class="panes"><signal-list></signal-list><wave-view></wave-view></div></div><div class="edge"></div></div><status-bar></status-bar><task-bar></task-bar>');
</script>
</body>
</html>
